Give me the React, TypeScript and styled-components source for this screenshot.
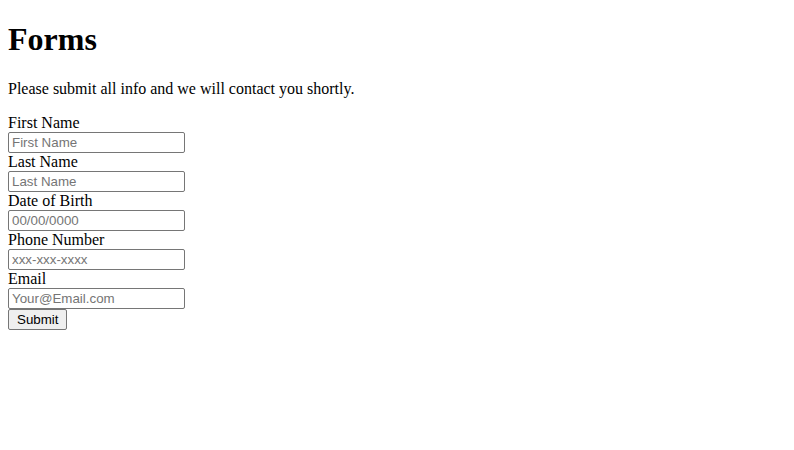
import { createGlobalStyle, styled } from "styled-components";

const GlobalStyle = createGlobalStyle`
  body {
    margin: 0 8px 8px;
    font-family: "Liberation Serif", "Times New Roman", serif;
    font-size: 16px;
    color: #000;
    background: #fff;
  }
`;

const Page = styled.div`
  display: flow-root;
`;

const Title = styled.h1`
  font-size: 32px;
  font-weight: 700;
  margin: 21.44px 0;
`;

const Intro = styled.p`
  margin: 16px 0;
`;

const Form = styled.form`
  display: flex;
  flex-direction: column;
  align-items: flex-start;
`;

const Label = styled.label`
  display: block;
  line-height: normal;
`;

const Input = styled.input`
  box-sizing: border-box;
  width: 177px;
  height: 21px;
  padding: 1px 3px;
  border: 1px solid #767676;
  border-radius: 2px;
  font-family: "Liberation Sans", Arial, sans-serif;
  font-size: 13.33px;
  color: #000;
  background: #fff;

  &::placeholder {
    color: #757575;
  }
`;

const SubmitButton = styled.button`
  box-sizing: border-box;
  height: 21px;
  padding: 1px 8px;
  border: 1px solid #767676;
  border-radius: 2px;
  background: #efefef;
  font-family: "Liberation Sans", Arial, sans-serif;
  font-size: 13.33px;
  color: #000;
`;

const fields = [
  { id: "first", label: "First Name", placeholder: "First Name" },
  { id: "last", label: "Last Name", placeholder: "Last Name" },
  { id: "dob", label: "Date of Birth", placeholder: "00/00/0000" },
  { id: "phone", label: "Phone Number", placeholder: "xxx-xxx-xxxx" },
  { id: "email", label: "Email", placeholder: "Your@Email.com" },
];

export default function App() {
  return (
    <Page>
      <GlobalStyle />
      <Title>Forms</Title>
      <Intro>Please submit all info and we will contact you shortly.</Intro>
      <Form onSubmit={(e) => e.preventDefault()}>
        {fields.map((f) => (
          <div key={f.id}>
            <Label htmlFor={f.id}>{f.label}</Label>
            <Input id={f.id} type="text" placeholder={f.placeholder} />
          </div>
        ))}
        <SubmitButton type="submit">Submit</SubmitButton>
      </Form>
    </Page>
  );
}
